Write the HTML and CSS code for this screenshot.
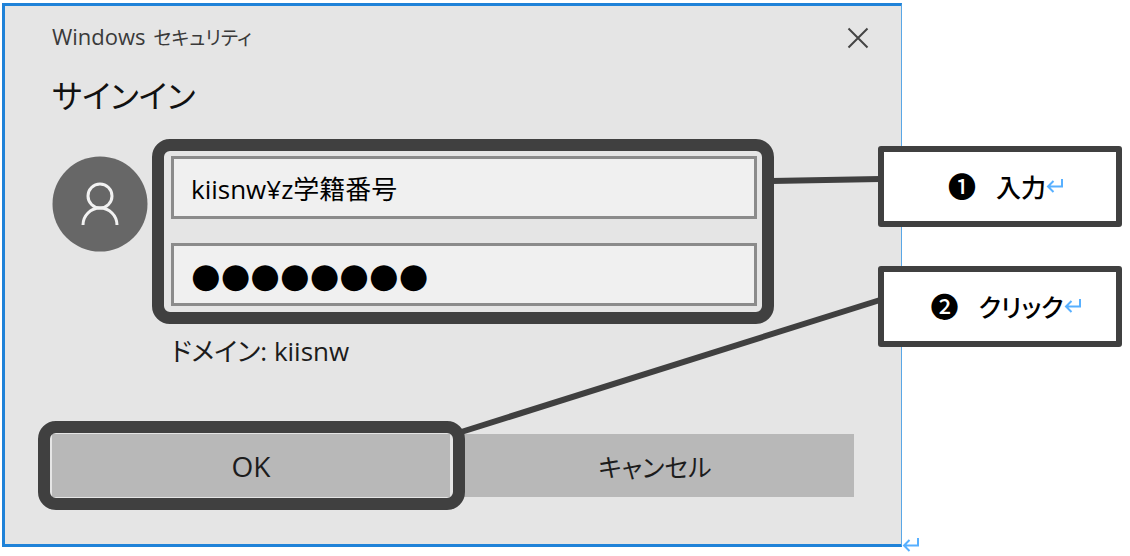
FILE: index.html
```html
<!DOCTYPE html>
<html lang="ja">
<head>
<meta charset="utf-8">
<meta name="viewport" content="width=device-width, initial-scale=1">
<title>Windows セキュリティ</title>
<link rel="stylesheet" href="styles.css">
</head>
<body>
<main class="figure">
  <form class="dialog">
    <header class="titlebar">
      <span class="caption">Windows <span class="caption-kana">セキュリティ</span></span>
      <button class="close" type="button" aria-label="閉じる">
        <svg viewBox="0 0 22 22" width="22" height="22" aria-hidden="true"><path d="M1.500 1.500L20.500 20.500M20.500 1.500L1.500 20.500"/></svg>
      </button>
    </header>
    <h1 class="heading">サインイン</h1>
    <div class="account">
      <svg class="avatar" viewBox="0 0 96 96" width="96" height="96" aria-hidden="true">
        <circle class="avatar-disc" cx="48" cy="48" r="47.500"/>
        <circle class="avatar-line" cx="48" cy="40" r="12"/>
        <path class="avatar-line" d="M31 69A17 17 0 0 1 65 69"/>
      </svg>
      <div class="credentials">
        <div class="fields">
          <input class="field" type="text" aria-label="ユーザー名" value="kiisnw¥z学籍番号">
          <input class="field field-masked" type="text" aria-label="パスワード" value="●●●●●●●●">
        </div>
        <p class="domain">ドメイン: kiisnw</p>
      </div>
    </div>
    <div class="actions">
      <div class="action action-marked"><button class="button button-ok" type="submit">OK</button></div>
      <div class="action"><button class="button" type="button">キャンセル</button></div>
    </div>
  </form>
  <div class="side">
    <svg class="mark" viewBox="0 0 18 16" width="18" height="16" aria-hidden="true"><path d="M16 1V8.500H2M7.500 3L2 8.500L7.500 14"/></svg>
  </div>
  <svg class="connectors" aria-hidden="true">
    <line x1="68.700%" y1="178" x2="78.400%" y2="176"/>
    <line x1="41%" y1="429" x2="78.400%" y2="297"/>
  </svg>
  <div class="callout callout-input">
    <span class="number">❶</span><span>入力</span>
    <svg class="mark" viewBox="0 0 18 16" width="18" height="16" aria-hidden="true"><path d="M16 1V8.500H2M7.500 3L2 8.500L7.500 14"/></svg>
  </div>
  <div class="callout callout-click">
    <span class="number">❷</span><span>クリック</span>
    <svg class="mark" viewBox="0 0 18 16" width="18" height="16" aria-hidden="true"><path d="M16 1V8.500H2M7.500 3L2 8.500L7.500 14"/></svg>
  </div>
</main>
</body>
</html>
```
FILE: styles.css
```css
* {
  box-sizing: border-box;
}

body {
  margin: 0;
  padding: 3px 8px 9px 2px;
  background: #fff;
  color: #1c1c1c;
  font-family: "Open Sans", "Noto Sans CJK JP", sans-serif;
  font-feature-settings: "palt";
}

.figure {
  position: relative;
  display: flex;
}

.dialog {
  flex: 1;
  padding: 14px 47px 47px;
  border: 3px solid #1f82d8;
  border-right: 1px solid #5aa7e6;
  background: #e5e5e5;
}

.titlebar {
  display: flex;
  align-items: flex-start;
  justify-content: space-between;
  height: 32px;
  margin-right: -15px;
}

.caption {
  color: #3a3a3a;
  font-size: 22px;
  line-height: 32px;
}

.caption-kana {
  margin-left: 2px;
  font-size: 19px;
}

.close {
  display: flex;
  padding: 7px 0 0;
  border: 0;
  background: none;
}

.close path {
  stroke: #444;
  stroke-width: 2;
}

.heading {
  margin: 20px 0 36px;
  color: #111;
  font-size: 32px;
  font-weight: 400;
  line-height: 48px;
}

.account {
  display: flex;
  align-items: flex-start;
  gap: 23px;
  padding-right: 97px;
}

.avatar {
  flex: none;
}

.avatar-disc {
  fill: #676767;
}

.avatar-line {
  fill: none;
  stroke: #f2f2f2;
  stroke-width: 3;
}

.credentials {
  flex: 1;
}

.fields {
  position: relative;
  display: grid;
  gap: 24px;
}

.fields::after,
.action-marked::after {
  content: "";
  position: absolute;
  z-index: 1;
  inset: -17px -17px -18px -19px;
  border: 12px solid #404040;
  border-radius: 18px;
  pointer-events: none;
}

.field {
  width: 100%;
  height: 63px;
  padding: 0 17px;
  border: 3px solid #8b8b8b;
  border-radius: 0;
  background: #f0f0f0;
  color: #000;
  font: inherit;
  font-size: 26px;
}

.field-masked {
  font-family: "DejaVu Sans", sans-serif;
  font-size: 34px;
}

.domain {
  margin: 27px 0 0;
  font-size: 26px;
  line-height: 36px;
}

.actions {
  display: flex;
  gap: 6px;
  margin-top: 65px;
}

.action {
  position: relative;
  flex: 1;
}

.action-marked::after {
  inset: -13px -15px -13px -14px;
}

.button {
  width: 100%;
  height: 63px;
  border: 0;
  background: #b8b8b8;
  color: #1c1c1c;
  font: inherit;
  font-size: 25px;
}

.button-ok {
  font-size: 28px;
}

.side {
  display: flex;
  align-items: flex-end;
  width: 220px;
}

.mark {
  overflow: visible;
  fill: none;
  stroke: #58b0ff;
  stroke-width: 2;
}

.side .mark {
  margin-bottom: -6px;
}

.connectors {
  position: absolute;
  z-index: 2;
  inset: 0;
  width: 100%;
  height: 100%;
  pointer-events: none;
}

.connectors line {
  stroke: #404040;
  stroke-width: 6;
}

.callout {
  position: absolute;
  z-index: 3;
  right: 0;
  display: flex;
  align-items: center;
  justify-content: center;
  width: 244px;
  height: 81px;
  padding: 0 0 2px 12px;
  border: 6px solid #404040;
  border-radius: 3px;
  background: #fff;
  color: #000;
  font-family: "Noto Sans CJK JP", sans-serif;
  font-size: 25px;
  font-weight: 500;
}

.callout-input {
  top: 143px;
}

.callout-click {
  top: 263px;
}

.number {
  margin-right: 20px;
  font-size: 28px;
}
```
